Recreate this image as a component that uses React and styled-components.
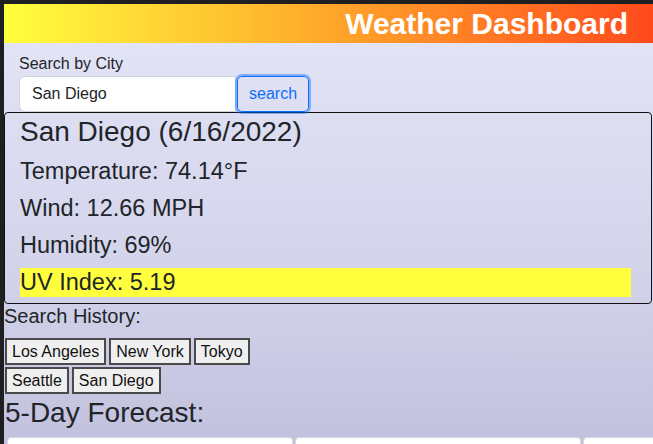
import React from 'react';
import styled, { createGlobalStyle } from 'styled-components';

const GlobalStyle = createGlobalStyle`
  html, body {
    margin: 0;
    padding: 0;
    background: #1f1f21; /* dark window edge */
    overflow: hidden;
  }
  body {
    font-family: "Liberation Sans", Arial, sans-serif;
    color: #212529;
  }
`;

const Page = styled.div`
  margin: 4px 0 0 4px;
  min-height: 440px;
  overflow: hidden;
  background: linear-gradient(180deg, #e6e6f8 0%, #d2d2ea 50%, #b6b6d5 100%);
`;

const Header = styled.header`
  height: 39px;
  display: flex;
  align-items: center;
  justify-content: flex-end;
  padding-right: 25px;
  background: linear-gradient(90deg, #ffff3e 0%, #ffb02c 45%, #ff4a1c 100%);
`;

const Title = styled.h1`
  margin: 0;
  font-size: 30px;
  font-weight: bold;
  color: #ffffff;
  line-height: 1;
`;

const SearchArea = styled.div`
  padding: 9px 0 0 15px;
`;

const Label = styled.label`
  display: block;
  font-size: 16px;
  line-height: 24px;
`;

const SearchRow = styled.div`
  display: flex;
  align-items: center;
`;

const Input = styled.input`
  width: 217px;
  height: 36px;
  box-sizing: border-box;
  padding: 0 12px;
  font-family: inherit;
  font-size: 16px;
  color: #212529;
  background: #ffffff;
  border: 1px solid #ced4da;
  border-radius: 6px 0 0 6px;
  outline: none;
`;

const SearchButton = styled.button`
  height: 36px;
  padding: 0 11px;
  font-family: inherit;
  font-size: 16px;
  color: #0d6efd;
  background: transparent;
  border: 1px solid #0d6efd;
  border-radius: 5px;
  box-shadow: 0 0 0 2px rgba(13, 110, 253, 0.45);
  margin-left: 1px;
`;

const Card = styled.section`
  border: 1px solid #111;
  border-radius: 4px;
  padding: 2px 20px 6px 15px;
  margin-right: 1px;
`;

const CityTitle = styled.h3`
  margin: 0;
  font-size: 28px;
  font-weight: normal;
  line-height: 34px;
`;

const Stat = styled.div`
  margin-top: 8px;
  font-size: 23.5px;
  line-height: 29px;
  background: ${(p) => (p.$highlight ? '#ffff3d' : 'transparent')};
`;

const SectionLabel = styled.div`
  font-size: 20px;
  line-height: 24px;
`;

const HistoryList = styled.div`
  width: 260px;
  display: flex;
  flex-wrap: wrap;
  gap: 2px 3px;
  margin: 10px 0 0 1px;
`;

const HistoryButton = styled.button`
  font-family: inherit;
  font-size: 16px;
  line-height: 19px;
  padding: 2px 5px;
  height: 27px;
  color: #111;
  background: #efefef;
  border: 2px solid #4a4a4a;
  border-radius: 0;
`;

const ForecastTitle = styled.h2`
  margin: 2px 0 0 1px;
  font-size: 28px;
  font-weight: normal;
  line-height: 34px;
`;

const ForecastRow = styled.div`
  display: flex;
  gap: 2px;
  margin: 7px 0 0 3px;
  overflow: hidden;
`;

const ForecastCard = styled.div`
  flex: 0 0 286px;
  height: 120px;
  background: #ffffff;
  border: 1px solid #d8d8e0;
  border-radius: 4px;
  box-sizing: border-box;
`;

const stats = [
  'Temperature: 74.14°F',
  'Wind: 12.66 MPH',
  'Humidity: 69%',
];

const history = ['Los Angeles', 'New York', 'Tokyo', 'Seattle', 'San Diego'];

export default function App() {
  return (
    <>
      <GlobalStyle />
      <Page>
        <Header>
          <Title>Weather Dashboard</Title>
        </Header>
        <SearchArea>
          <Label htmlFor="city">Search by City</Label>
          <SearchRow>
            <Input id="city" defaultValue="San Diego" />
            <SearchButton>search</SearchButton>
          </SearchRow>
        </SearchArea>
        <Card>
          <CityTitle>San Diego (6/16/2022)</CityTitle>
          {stats.map((s) => (
            <Stat key={s}>{s}</Stat>
          ))}
          <Stat $highlight>UV Index: 5.19</Stat>
        </Card>
        <SectionLabel>Search History:</SectionLabel>
        <HistoryList>
          {history.map((city) => (
            <HistoryButton key={city}>{city}</HistoryButton>
          ))}
        </HistoryList>
        <ForecastTitle>5-Day Forecast:</ForecastTitle>
        <ForecastRow>
          <ForecastCard />
          <ForecastCard />
          <ForecastCard />
        </ForecastRow>
      </Page>
    </>
  );
}
